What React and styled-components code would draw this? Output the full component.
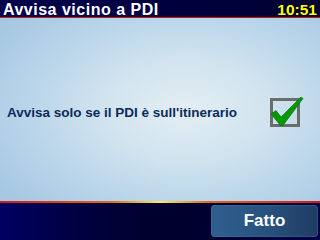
import React from "react";
import styled, { createGlobalStyle } from "styled-components";

const Global = createGlobalStyle`
  html, body { margin: 0; padding: 0; width: 320px; height: 240px; overflow: hidden; }
  body { font-family: "Liberation Sans", Arial, sans-serif; }
`;

const Screen = styled.div`
  width: 320px;
  height: 240px;
  display: flex;
  flex-direction: column;
`;

const Header = styled.div`
  height: 17px;
  flex: none;
  display: flex;
  align-items: center;
  justify-content: space-between;
  padding: 0 3px 0 3px;
  background: linear-gradient(90deg, #00004c 0%, #000040 50%, #000030 100%);
`;

const Title = styled.div`
  color: #ffffff;
  font-weight: bold;
  font-size: 16px;
  letter-spacing: 0.5px;
  line-height: 17px;
  margin-top: 1px;
`;

const Clock = styled.div`
  color: #ffff00;
  font-weight: bold;
  font-size: 15.5px;
  line-height: 17px;
  margin-top: 1px;
`;

const Rule = styled.div`
  height: ${(p) => p.$h}px;
  flex: none;
  background: ${(p) => p.$bg};
`;

const Content = styled.div`
  flex: 1;
  padding-top: 79px;
  background: radial-gradient(ellipse 70% 75% at 58% 50%, #e3eef4 0%, #d2e4ef 35%, #b9d5ea 70%, #a7c8e2 100%);
`;

const OptionRow = styled.div`
  display: flex;
  align-items: center;
  justify-content: space-between;
  padding: 0 20px 0 7px;
  height: 30px;
`;

const OptionLabel = styled.div`
  color: #0c2a5c;
  font-weight: bold;
  font-size: 13.5px;
  margin-top: 1px;
`;

const CheckBox = styled.div`
  position: relative;
  width: 24px;
  height: 23px;
  border: 3px solid #6a6c6e;
`;

const CheckMark = styled.svg`
  position: absolute;
  left: -3px;
  top: -4px;
  width: 34px;
  height: 32px;
  overflow: visible;
`;

const Footer = styled.div`
  height: 37px;
  flex: none;
  display: flex;
  justify-content: flex-end;
  align-items: flex-start;
  padding: 2px 2px 0 0;
  box-sizing: border-box;
  background: linear-gradient(90deg, #000062 0%, #000040 25%, #00002c 50%, #000034 75%, #00004a 100%);
`;

const Button = styled.div`
  width: 107px;
  height: 32px;
  border-radius: 4px;
  display: flex;
  align-items: center;
  justify-content: center;
  background: linear-gradient(90deg, #2f5f8f 0%, #28527e 50%, #1f3d62 100%);
  box-shadow: inset 0 0 0 1px rgba(80, 120, 160, 0.35);
  color: #ffffff;
  font-weight: bold;
  font-size: 17px;
`;

export default function App() {
  return (
    <>
      <Global />
      <Screen>
        <Header>
          <Title>Avvisa vicino a PDI</Title>
          <Clock>10:51</Clock>
        </Header>
        <Rule $h={1} $bg="linear-gradient(90deg, #d01818 0%, #cc1010 50%, #c81010 100%)" />
        <Content>
          <OptionRow>
            <OptionLabel>Avvisa solo se il PDI è sull'itinerario</OptionLabel>
            <CheckBox>
              <CheckMark viewBox="0 0 34 32">
                <polygon
                  points="1,17 6,13.5 11,20 31,0 33,1.5 13,28.5 10.5,28.5"
                  fill="#009a00"
                  stroke="#006a00"
                  strokeWidth="0.6"
                />
              </CheckMark>
            </CheckBox>
          </OptionRow>
        </Content>
        <Rule $h={2} $bg="linear-gradient(90deg, #d01a1a 0%, #e06a20 35%, #f4f060 50%, #e06a20 65%, #d01a1a 100%)" />
        <Footer>
          <Button>Fatto</Button>
        </Footer>
      </Screen>
    </>
  );
}
